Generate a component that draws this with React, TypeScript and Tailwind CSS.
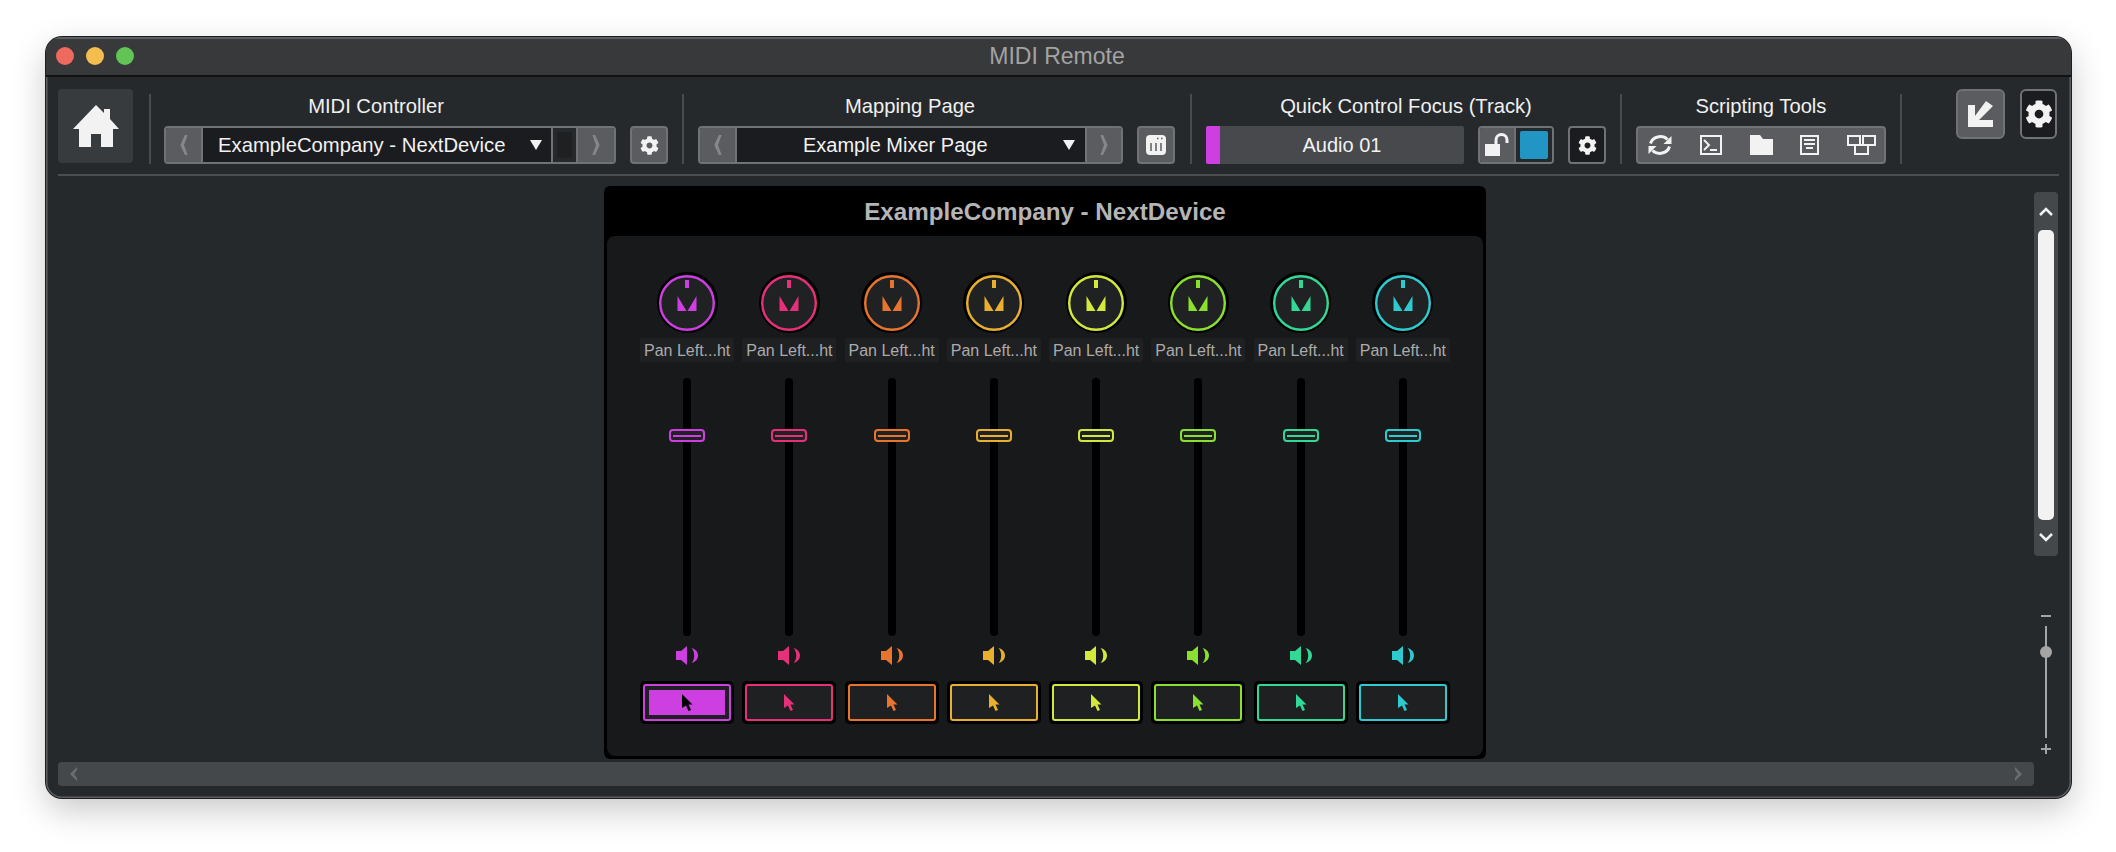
import { FaCog } from "react-icons/fa";

const strips = ["#cd3fe1", "#e63079", "#e9742d", "#e9b02f", "#d3e83c", "#8ae02f", "#31d896", "#2dcbcf"];

function GearButton({ dark = false }: { dark?: boolean }) {
  return (
    <div
      className={`flex h-[38px] w-[38px] items-center justify-center rounded-[4px] border-2 border-[#707275] text-[#f2f2f2] ${
        dark ? "bg-[#1b1c1f]" : "bg-[#5a5c60]"
      }`}
    >
      <FaCog size={19} />
    </div>
  );
}

function ArrowCell({ dir, width }: { dir: "left" | "right"; width: string }) {
  return (
    <div className={`flex h-full items-center justify-center bg-[#5a5c60] ${width}`}>
      <svg width="10" height="22" viewBox="0 0 10 24" fill="#85878a">
        {dir === "left" ? <path d="M6 1h3L5 12l4 11H6L1 12z" /> : <path d="M4 1H1L5 12 1 23h3l5-11z" />}
      </svg>
    </div>
  );
}

function Caret() {
  return (
    <svg width="12" height="10" viewBox="0 0 12 10" fill="#f2f2f2">
      <path d="M0 0h12L6 10z" />
    </svg>
  );
}

function Section({
  label,
  width,
  labelWidth,
  children,
}: {
  label: string;
  width: string;
  labelWidth: string;
  children: React.ReactNode;
}) {
  return (
    <div className={`flex h-[70px] shrink-0 flex-col ${width}`}>
      <div className={`h-[24px] text-center text-[20.200px] leading-[24px] whitespace-nowrap text-[#f0f0f0] ${labelWidth}`}>
        {label}
      </div>
      <div className="mt-[8px] flex h-[38px] items-center">{children}</div>
    </div>
  );
}

function Separator() {
  return <div className="h-[70px] w-[2px] shrink-0 bg-[#494b4e]" />;
}

function Knob({ color }: { color: string }) {
  return (
    <div className="flex h-[61px] w-[61px] items-center justify-center rounded-full bg-black">
      <svg width="56" height="56" viewBox="0 0 56 56">
        <circle cx="28" cy="28" r="26.800" fill="#202123" stroke={color} strokeWidth="2.400" />
        <rect x="26" y="5" width="4" height="8" fill={color} />
        <path d="M18.500 21 27.500 36H18.500zM37.500 21V36H28.500z" fill={color} />
      </svg>
    </div>
  );
}

function Speaker({ color }: { color: string }) {
  return (
    <svg width="22" height="19" viewBox="0 0 22 19" fill={color}>
      <path d="M0 5h5L11 0v19L5 14H0z" />
      <path d="M15.500 2c4 1 6.500 4 6.500 7.500s-2.500 6.500-6.500 7.500c1.800-2 2.700-4.500 2.700-7.500s-.9-5.500-2.700-7.500z" />
    </svg>
  );
}

function Cursor({ color }: { color: string }) {
  return (
    <svg width="12" height="17" viewBox="0 0 12 17" fill={color}>
      <path d="M1 0 11.500 10.500H7.500L10 16l-2.500 1-2.500-5.500L1 14z" />
    </svg>
  );
}

function Strip({ color, active }: { color: string; active: boolean }) {
  return (
    <div className="flex flex-col items-center">
      <div className="mt-[36px]">
        <Knob color={color} />
      </div>
      <div className="mt-[5px] flex h-[24px] w-[94px] items-center justify-center rounded-[2px] bg-[#1f2022] pt-[1px] text-[16px] text-[#ababab]">
        Pan Left...ht
      </div>
      <div className="relative mt-[16px] h-[258px] w-[8px] rounded-full bg-black">
        <div
          className="absolute top-[51px] left-[-14px] flex h-[13px] w-[36px] items-center rounded-[4px] border-2 bg-[#202123] px-[2px]"
          style={{ borderColor: color }}
        >
          <div className="h-[2px] w-full" style={{ backgroundColor: color }} />
        </div>
      </div>
      <div className="mt-[10px] flex h-[19px]">
        <Speaker color={color} />
      </div>
      <div className="mt-[16px] h-[43px] w-[94px] rounded-[5px] bg-black p-[3px]">
        <div
          className="flex h-full w-full items-center justify-center rounded-[3px] border-2 bg-[#1f2022]"
          style={{ borderColor: color }}
        >
          {active ? (
            <div className="flex h-[25px] w-[76px] items-center justify-center" style={{ backgroundColor: color }}>
              <Cursor color="#000000" />
            </div>
          ) : (
            <Cursor color={color} />
          )}
        </div>
      </div>
    </div>
  );
}

function ToolIcons() {
  const s = "#f2f2f2";
  return (
    <div className="flex h-full w-full items-center justify-between rounded-[4px] border-2 border-[#707275] bg-[#5a5c60] pr-[8px] pl-[10px]">
      <svg width="24" height="24" viewBox="0 0 24 24" fill="none" stroke={s} strokeWidth="3">
        <path d="M2.500 10.500a10 9 0 0 1 17-4" />
        <path d="M21.500 13.500a10 9 0 0 1-17 4" />
        <path d="M23.500 3v8h-8z" fill={s} stroke="none" />
        <path d="M.5 21v-8h8z" fill={s} stroke="none" />
      </svg>
      <svg width="22" height="20" viewBox="0 0 22 20" fill="none" stroke={s} strokeWidth="2">
        <rect x="1" y="1" width="20" height="18" />
        <path d="M4 5l5 5-5 5M10 15h7" />
      </svg>
      <svg width="23" height="20" viewBox="0 0 23 20" fill={s}>
        <path d="M0 0h10l3 4h10v16H0z" />
      </svg>
      <svg width="19" height="20" viewBox="0 0 19 20" fill="none" stroke={s} strokeWidth="2">
        <rect x="1" y="1" width="17" height="18" />
        <path d="M4 5h11M4 9h11M6 13h7" />
      </svg>
      <svg width="29" height="20" viewBox="0 0 29 20" fill="none" stroke={s} strokeWidth="2">
        <path d="M1 1h12v9H1zM16 1h12v9H16zM8 10h13v9H8z" />
      </svg>
    </div>
  );
}

export default function App() {
  return (
    <div className="h-[852px] w-[2116px] overflow-hidden bg-white font-['Liberation_Sans',Arial,sans-serif]">
      <div className="mt-[37px] ml-[46px] flex h-[761px] w-[2025px] flex-col overflow-hidden rounded-[16px] bg-[#26292c] shadow-[inset_0_0_0_1.500px_#5c5e61,0_0_0_1px_#1c1d1f,0_12px_34px_rgba(0,0,0,0.22)]">
        {/* title bar */}
        <div className="relative flex h-[40px] shrink-0 items-center border-b-2 border-[#111214] bg-[#38393b] pl-[10px] shadow-[inset_0_2px_0_#5c5e61]">
          <div className="flex gap-[12px]">
            <div className="h-[18px] w-[18px] rounded-full bg-[#ee695e]" />
            <div className="h-[18px] w-[18px] rounded-full bg-[#f5bd4f]" />
            <div className="h-[18px] w-[18px] rounded-full bg-[#61c454]" />
          </div>
          <div className="absolute right-[3px] left-0 text-center text-[23px] text-[#a3a3a3]">MIDI Remote</div>
        </div>

        {/* toolbar */}
        <div className="mx-[12px] flex h-[99px] shrink-0 border-b-2 border-[#4b4d50] pt-[12px]">
          <div className="flex h-[74px] w-[75px] shrink-0 items-center justify-center rounded-[4px] bg-[#383b3e]">
            <svg width="46" height="42" viewBox="0 0 46 42" fill="#f2f2f2">
              <path d="M23 0 31 8V4H37V14L46 24H40V42H28V29H18V42H6V24H0z" />
            </svg>
          </div>
          <div className="mt-[5px] ml-[16px] flex h-[70px]">
            <Separator />
            <div className="ml-[13px]">
              <Section label="MIDI Controller" width="w-[518px]" labelWidth="w-[424px]">
                <div className="flex h-full w-[452px] overflow-hidden rounded-[4px] border-2 border-[#707275]">
                  <ArrowCell dir="left" width="w-[35px]" />
                  <div className="flex h-full w-[352px] items-center border-x-2 border-[#707275] bg-[#1b1c1f] pr-[9px] pl-[15px] text-[20.300px] text-[#f2f2f2]">
                    <span className="flex-1">ExampleCompany - NextDevice</span>
                    <Caret />
                  </div>
                  <div className="flex h-full w-[25px] items-center justify-center border-r-2 border-[#707275] bg-[#26292c]">
                    <div className="h-[26px] w-[15px] rounded-[2px] bg-[#1e2022]" />
                  </div>
                  <ArrowCell dir="right" width="w-[36px]" />
                </div>
                <div className="ml-[14px]">
                  <GearButton />
                </div>
              </Section>
            </div>
            <Separator />
            <div className="ml-[14px]">
              <Section label="Mapping Page" width="w-[492px]" labelWidth="w-[424px]">
                <div className="flex h-full w-[425px] overflow-hidden rounded-[4px] border-2 border-[#707275]">
                  <ArrowCell dir="left" width="w-[35px]" />
                  <div className="flex h-full w-[352px] items-center border-x-2 border-[#707275] bg-[#1b1c1f] pr-[10px] pl-[66px] text-[20px] text-[#f2f2f2]">
                    <span className="flex-1">Example Mixer Page</span>
                    <Caret />
                  </div>
                  <ArrowCell dir="right" width="w-[34px]" />
                </div>
                <div className="ml-[14px] flex h-[38px] w-[38px] items-center justify-center rounded-[4px] border-2 border-[#707275] bg-[#5a5c60]">
                  <svg width="20" height="20" viewBox="0 0 20 20">
                    <rect width="20" height="20" rx="4" fill="#f2f2f2" />
                    <path d="M5 8v8M10 8v8M15 8v8" stroke="#5a5c60" strokeWidth="1.500" />
                    <path d="M11 3.500h1.500M15 3.500h1.500" stroke="#5a5c60" strokeWidth="1.500" />
                  </svg>
                </div>
              </Section>
            </div>
            <Separator />
            <div className="ml-[14px]">
              <Section label="Quick Control Focus (Track)" width="w-[414px]" labelWidth="w-[400px]">
                <div className="flex h-full w-[258px] overflow-hidden rounded-[2px] bg-[#47494d]">
                  <div className="h-full w-[14px] bg-[#cd3fe1]" />
                  <div className="flex-1 text-center text-[20px] leading-[38px] text-[#f2f2f2]">Audio 01</div>
                </div>
                <div className="ml-[14px] flex h-full w-[76px] overflow-hidden rounded-[4px] border-2 border-[#707275]">
                  <div className="flex h-full w-[36px] items-center justify-center border-r-2 border-[#707275] bg-[#5a5c60]">
                    <svg width="24" height="24" viewBox="0 0 24 24" fill="none">
                      <rect x="0" y="11" width="15" height="12" fill="#f2f2f2" />
                      <path d="M11 11V7a5.500 5.500 0 0 1 11 0v3" stroke="#f2f2f2" strokeWidth="3" />
                    </svg>
                  </div>
                  <div className="flex flex-1 items-center justify-center bg-[#26292c]">
                    <div className="h-[28px] w-[28px] rounded-[2px] bg-[#2196c4]" />
                  </div>
                </div>
                <div className="ml-[14px]">
                  <GearButton dark />
                </div>
              </Section>
            </div>
            <Separator />
            <div className="ml-[14px]">
              <Section label="Scripting Tools" width="w-[264px]" labelWidth="w-[250px]">
                <div className="h-full w-[250px]">
                  <ToolIcons />
                </div>
              </Section>
            </div>
            <Separator />
            <div className="mt-[-5px] ml-[54px] flex gap-[15px]">
              <div className="flex h-[50px] w-[49px] items-center justify-center rounded-[6px] border-2 border-[#707275] bg-[#5a5c60]">
                <svg width="26" height="26" viewBox="0 0 26 26" fill="#f2f2f2">
                  <path d="M18 0 25 5 11 19H25V26H0V4H7V15z" />
                </svg>
              </div>
              <div className="flex h-[50px] w-[37px] items-center justify-center rounded-[6px] border-2 border-[#707275] bg-[#1b1c1f] text-[#f2f2f2]">
                <FaCog size={28} />
              </div>
            </div>
          </div>
        </div>

        {/* content */}
        <div className="ml-[12px] flex flex-1">
          <div className="flex w-[1976px] shrink-0 flex-col items-center">
            <div className="mt-[10px] mr-[2px] flex h-[573px] w-[882px] flex-col rounded-[6px] bg-black px-[3px] pb-[3px]">
              <div className="h-[50px] pt-[1px] text-center text-[24.200px] leading-[50px] font-bold text-[#b5b5b5]">
                ExampleCompany - NextDevice
              </div>
              <div className="flex-1 rounded-[8px] bg-[#18191b] pl-[29px]">
                <div className="grid w-[818px] grid-cols-8">
                  {strips.map((color, i) => (
                    <Strip key={color} color={color} active={i === 0} />
                  ))}
                </div>
              </div>
            </div>
            <div className="mt-[3px] flex h-[24px] w-full items-center justify-between rounded-[4px] bg-[#45484b] px-[10px]">
              <svg width="10" height="14" viewBox="0 0 10 14" fill="#6b6d70">
                <path d="M9 0 2 7l7 7V11L6 7l3-4z" />
              </svg>
              <svg width="10" height="14" viewBox="0 0 10 14" fill="#6b6d70">
                <path d="M1 0l7 7-7 7V11l3-4-3-4z" />
              </svg>
            </div>
          </div>

          <div className="flex w-[24px] shrink-0 flex-col items-center">
            <div className="mt-[16px] flex h-[364px] w-[24px] flex-col items-center rounded-[4px] bg-[#45484b]">
              <div className="flex h-[38px] items-center">
                <svg width="14" height="10" viewBox="0 0 14 10" fill="none" stroke="#f2f2f2" strokeWidth="2.500">
                  <path d="M1 9l6-6 6 6" />
                </svg>
              </div>
              <div className="h-[290px] w-[16px] rounded-[5px] bg-[#f2f2f2]" />
              <div className="flex flex-1 items-center">
                <svg width="14" height="10" viewBox="0 0 14 10" fill="none" stroke="#f2f2f2" strokeWidth="2.500">
                  <path d="M1 1l6 6 6-6" />
                </svg>
              </div>
            </div>
            <div className="mt-[59px] flex flex-col items-center">
              <div className="h-[2px] w-[10px] bg-[#a5a5a5]" />
              <div className="relative mt-[9px] h-[112px] w-[2px] bg-[#a5a5a5]">
                <div className="absolute top-[20px] left-[-5px] h-[12px] w-[12px] rounded-full bg-[#a5a5a5]" />
              </div>
              <svg className="mt-[6px]" width="10" height="10" viewBox="0 0 10 10" fill="#a5a5a5">
                <path d="M4 0h2v4h4v2H6v4H4V6H0V4h4z" />
              </svg>
            </div>
          </div>
        </div>
      </div>
    </div>
  );
}
